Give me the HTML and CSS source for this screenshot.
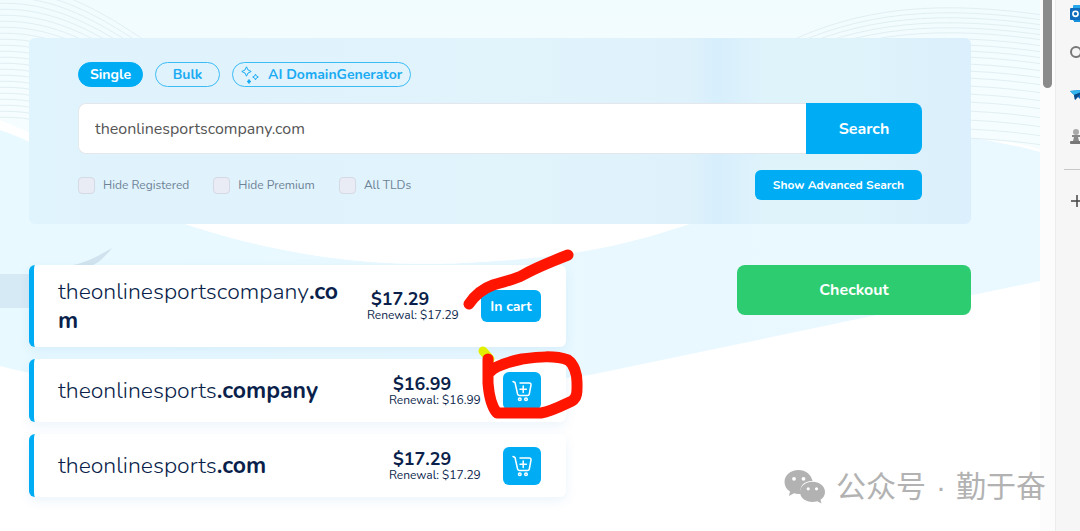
FILE: index.html
```html
<!DOCTYPE html>
<html lang="en">
  <head>
    <meta charset="UTF-8" />
    <title>Domain Search</title>
    <link rel="stylesheet" href="styles.css">
  </head>
  <body>
    <div class="page">
      <!-- waves behind the content -->
      <svg class="page-bg" viewBox="0 0 1040 531" preserveAspectRatio="none" aria-hidden="true">
        <defs>
          <linearGradient id="sky" x1="0" y1="0" x2="0" y2="1">
            <stop offset="0" stop-color="#f1fcff" />
            <stop offset="1" stop-color="#fbfeff" />
          </linearGradient>
          <linearGradient id="wave" x1="0" y1="0" x2="1" y2="0">
            <stop offset="0" stop-color="#e8f9ff" />
            <stop offset="1" stop-color="#eaf8ff" />
          </linearGradient>
          <path id="lineLeft" d="M-10 -14C50 -20 100 10 150 44" />
          <path id="lineRight" d="M780 46C860 6 940 0 1050 16" />
        </defs>
        <rect width="1040" height="531" fill="#fff" />
        <path d="M0 0H1040V150C900 100 800 260 560 262C360 268 160 190 0 120Z" fill="url(#sky)" />
        <path d="M0 130C60 150 120 200 185 224C300 262 400 268 480 262C590 256 640 240 690 222C780 120 920 120 1040 152V281L590 375C400 400 100 395 0 366Z" fill="url(#wave)" />
        <path d="M185 224C300 262 400 268 480 262C590 256 640 240 690 224Z" fill="#fff" />
        <path d="M60 268C85 264 98 256 112 248C104 258 96 266 84 268Z" fill="#d0e3ee" />
        <path d="M0 274H60V308H0Z" fill="#d6eaf5" />
        <g fill="none" stroke="#e1eff3">
          <use href="#lineLeft" />
          <use href="#lineLeft" y="6" />
          <use href="#lineLeft" y="12" />
          <use href="#lineLeft" y="18" />
          <use href="#lineLeft" y="24" />
          <use href="#lineLeft" y="30" />
          <use href="#lineLeft" y="36" />
          <use href="#lineLeft" y="42" />
          <use href="#lineLeft" y="48" />
          <use href="#lineLeft" y="54" />
          <use href="#lineLeft" y="60" />
          <use href="#lineLeft" y="66" />
          <use href="#lineLeft" y="72" />
          <use href="#lineLeft" y="78" />
          <use href="#lineLeft" y="84" />
          <use href="#lineLeft" y="90" />
          <use href="#lineLeft" y="96" />
          <use href="#lineLeft" y="102" />
          <use href="#lineLeft" y="108" />
          <use href="#lineLeft" y="114" />
          <use href="#lineLeft" y="120" />
          <use href="#lineLeft" y="126" />
          <use href="#lineLeft" y="132" />
          <use href="#lineRight" />
          <use href="#lineRight" y="5" />
          <use href="#lineRight" y="10" />
          <use href="#lineRight" y="15" />
          <use href="#lineRight" y="20" />
          <use href="#lineRight" y="25" />
          <use href="#lineRight" y="31" />
          <use href="#lineRight" y="37" />
          <use href="#lineRight" y="43" />
          <use href="#lineRight" y="49" />
          <use href="#lineRight" y="56" />
          <use href="#lineRight" y="63" />
          <use href="#lineRight" y="70" />
          <use href="#lineRight" y="78" />
          <use href="#lineRight" y="86" />
          <use href="#lineRight" y="94" />
          <use href="#lineRight" y="103" />
          <use href="#lineRight" y="112" />
          <use href="#lineRight" y="121" />
          <use href="#lineRight" y="130" />
        </g>
      </svg>

      <main class="content">
        <form class="search-panel">
          <div class="tabs">
            <button type="button" class="tab active">Single</button>
            <button type="button" class="tab">Bulk</button>
            <button type="button" class="tab tab-ai">
              <svg width="18" height="18" viewBox="0 0 18 18" fill="none" stroke="currentColor" stroke-linejoin="round" aria-hidden="true">
                <path d="M5.500 .8Q6.200 4.800 10.200 5.500Q6.200 6.200 5.500 10.200Q4.800 6.200 .8 5.500Q4.800 4.800 5.500 .8Z" />
                <path d="M14.500 8.200Q15 10.500 17.300 11Q15 11.500 14.500 13.800Q14 11.500 11.700 11Q14 10.500 14.500 8.200Z" />
                <path d="M8 13.500Q8.300 15.200 10 15.500Q8.300 15.800 8 17.500Q7.700 15.800 6 15.500Q7.700 15.200 8 13.500Z" fill="currentColor" />
              </svg>
              AI DomainGenerator
            </button>
          </div>

          <div class="search-row">
            <input type="text" class="search-input" value="theonlinesportscompany.com" aria-label="Domain name" />
            <button type="submit" class="btn search-btn">Search</button>
          </div>

          <div class="options">
            <label class="check"><input type="checkbox" />Hide Registered</label>
            <label class="check"><input type="checkbox" />Hide Premium</label>
            <label class="check"><input type="checkbox" />All TLDs</label>
            <button type="button" class="btn advanced-btn">Show Advanced Search</button>
          </div>
        </form>

        <div class="columns">
          <div class="results">
            <div class="result">
              <div class="domain">theonlinesportscompany<b>.com</b></div>
              <div class="price">
                <strong>$17.29</strong>
                <span>Renewal: $17.29</span>
              </div>
              <button class="btn in-cart">In cart</button>
            </div>

            <div class="result">
              <div class="domain">theonlinesports<b>.company</b></div>
              <div class="price">
                <strong>$16.99</strong>
                <span>Renewal: $16.99</span>
              </div>
              <button class="btn add-cart" aria-label="Add to cart">
                <svg width="20" height="22" viewBox="0 0 20 22" fill="none" stroke="currentColor" stroke-width="1.500" stroke-linecap="round" stroke-linejoin="round">
                  <path d="M1 1.500L3 2.500L5.600 14Q6 15.500 7.500 15.500H15.500Q17 15.500 17.300 14L19 5Q19.200 3 17.300 3H8" />
                  <path d="M11.200 6V12.400M8 9.200H14.400" />
                  <circle cx="7.800" cy="19.200" r="1.300" />
                  <circle cx="14" cy="19.200" r="1.300" />
                </svg>
              </button>
            </div>

            <div class="result">
              <div class="domain">theonlinesports<b>.com</b></div>
              <div class="price">
                <strong>$17.29</strong>
                <span>Renewal: $17.29</span>
              </div>
              <button class="btn add-cart" aria-label="Add to cart">
                <svg width="20" height="22" viewBox="0 0 20 22" fill="none" stroke="currentColor" stroke-width="1.500" stroke-linecap="round" stroke-linejoin="round">
                  <path d="M1 1.500L3 2.500L5.600 14Q6 15.500 7.500 15.500H15.500Q17 15.500 17.300 14L19 5Q19.200 3 17.300 3H8" />
                  <path d="M11.200 6V12.400M8 9.200H14.400" />
                  <circle cx="7.800" cy="19.200" r="1.300" />
                  <circle cx="14" cy="19.200" r="1.300" />
                </svg>
              </button>
            </div>

            <!-- pen marks over the results -->
            <svg class="marks" width="130" height="180" viewBox="460 245 130 180" fill="none" stroke-width="11" stroke-linecap="round" stroke-linejoin="round" aria-hidden="true">
              <path d="M483 351L490 359" stroke="#e2f000" stroke-width="9" />
              <path d="M469 304C475 295 482 289 493 285C505 281 514 280 523 275C535 268 550 262 568 255" stroke="#ff1500" />
              <path d="M488 359V383C489 396 491 406 497 413H541C553 411 563 405 572 401C578 397 577 390 577 382C577 374 574 364 568 360C554 355 538 357 522 359C508 362 495 366 490 372" stroke="#ff1500" />
            </svg>
          </div>

          <button class="checkout">Checkout</button>
        </div>
      </main>
    </div>

    <div class="scrollbar"><div class="thumb"></div></div>

    <aside class="sidebar">
      <svg width="20" height="18" viewBox="0 0 20 18">
        <rect x="3" width="15" height="16" rx="1" fill="#28a8ea" />
        <rect x="4" y="12" width="14" height="5" fill="#1490df" />
        <rect y="3" width="12" height="12" rx="1" fill="#0f6cbd" />
        <circle cx="5.500" cy="8.800" r="2.600" fill="none" stroke="#fff" stroke-width="1.600" />
      </svg>
      <svg width="20" height="18" viewBox="0 0 20 18" fill="none" stroke="#777" stroke-width="2">
        <circle cx="6" cy="6" r="5" />
        <path d="M10 10L15 15" />
      </svg>
      <svg width="20" height="18" viewBox="0 0 20 18">
        <path d="M0 4L18 2L13 15L8 10L5 13L4 8Z" fill="#0b69c4" />
        <path d="M0 4L18 2L4 8Z" fill="#33b6f0" />
        <path d="M4 8L12 5L5 13Z" fill="#0a4a86" />
      </svg>
      <svg width="20" height="18" viewBox="0 0 20 18" fill="#777">
        <circle cx="6" cy="4" r="3" fill="#aaa" />
        <path d="M2 7H10V9H8L9 13H3L4 9H2Z" fill="#888" />
        <rect y="13" width="12" height="3" rx="1" />
        <circle cx="14" cy="5" r="3" />
        <path d="M11 8H18V16H13Z" />
      </svg>
      <hr>
      <svg width="20" height="18" viewBox="0 0 20 18" fill="none" stroke="#444" stroke-width="1.500">
        <path d="M1 8H13M7 2V14" />
      </svg>
    </aside>

    <div class="watermark">
      <svg width="42" height="36" viewBox="0 0 42 36" fill="#b2b2b2" aria-hidden="true">
        <path d="M14.500 1C6.500 1 .5 6.300 .5 13C.5 17 2.600 20.300 6 22.500L5 27L10 24.300C12 25 15 25.200 17 24.800C14.500 17 21 11.500 28.500 12C27.300 5.500 21.500 1 14.500 1Z" />
        <path d="M28.500 12.800C21.500 12.800 16 17.400 16 23C16 28.800 21.500 33 28.500 33C30 33 31.800 32.700 33.300 32.300L37.500 34.500L36.500 30.800C39.300 28.900 41 26.200 41 23C41 17.400 35.500 12.800 28.500 12.800Z" />
        <g fill="#fff">
          <circle cx="10" cy="9.800" r="1.900" />
          <circle cx="19.500" cy="9.800" r="1.900" />
          <circle cx="24.200" cy="19.800" r="1.600" />
          <circle cx="32.500" cy="19.800" r="1.600" />
        </g>
      </svg>
      <span>公众号</span>
      <span>·</span>
      <span>勤于奋</span>
    </div>
  </body>
</html>
```
FILE: styles.css
```css
* {
  box-sizing: border-box;
}
body {
  margin: 0;
  display: flex;
  min-height: 100vh;
  font-family: Nunito, Lato, sans-serif;
  color: #0b1f4b;
  background-color: #fff;
  overflow: hidden;
}
button {
  font-family: inherit;
  cursor: pointer;
}
.page {
  position: relative;
  flex: 1;
}
.page-bg {
  position: absolute;
  top: 0;
  left: 0;
  width: 100%;
  height: 100%;
}
.content {
  position: relative;
  padding: 38px 69px 34px 29px;
}

/* Search panel */
.search-panel {
  display: flex;
  flex-direction: column;
  gap: 16px;
  padding: 24px 49px;
  border-radius: 6px;
  background: linear-gradient(
    90deg,
    #e0f4fd 0%,
    #e0f2fc 20%,
    #e1f4fc 50%,
    #dff2fb 70%,
    #d7eefc 73%,
    #dff3fb 78%,
    #dff3fb 88%,
    #dbeffc 100%
  );
}
.tabs {
  display: flex;
  gap: 12px;
}
.tab {
  display: flex;
  align-items: center;
  justify-content: center;
  min-width: 65px;
  height: 25px;
  padding: 0 8px;
  border: 1px solid #3cbcf6;
  border-radius: 13px;
  background: none;
  color: #1aabf3;
  font-size: 14px;
  font-weight: 700;
}
.tab.active {
  background-color: #00adf5;
  border-color: #00adf5;
  color: #fff;
}
.tab-ai {
  gap: 9px;
}
.search-row {
  display: flex;
}
.search-input {
  flex: 1;
  min-width: 0;
  height: 51px;
  padding: 0 16px;
  border: 1px solid #e4e8ec;
  border-right: none;
  border-radius: 8px 0 0 8px;
  background-color: #fff;
  color: #555;
  font-family: inherit;
  font-size: 16px;
}
.btn {
  border: none;
  border-radius: 6px;
  background-color: #00adf5;
  color: #fff;
  font-weight: 700;
}
.search-btn {
  width: 116px;
  border-radius: 0 8px 8px 0;
  font-size: 16px;
}
.options {
  display: flex;
  align-items: center;
  gap: 24px;
}
.check {
  display: flex;
  align-items: center;
  gap: 8px;
  color: #6d8296;
  font-size: 12px;
  line-height: 16px;
}
.check input {
  appearance: none;
  width: 17px;
  height: 17px;
  margin: 0;
  border: 1px solid #d5d9e3;
  border-radius: 4px;
  background-color: #e9ecf5;
}
.advanced-btn {
  height: 30px;
  margin-left: auto;
  padding: 0 18px;
  font-size: 12px;
}

/* Results and checkout */
.columns {
  display: flex;
  align-items: flex-start;
  justify-content: space-between;
  margin-top: 41px;
}
.results {
  position: relative;
  display: flex;
  flex-direction: column;
  gap: 12px;
  width: 57%;
}
.result {
  display: flex;
  align-items: center;
  min-height: 63px;
  padding: 12px 25px 12px 24px;
  border-left: 5px solid #00adf5;
  border-radius: 6px;
  background-color: #fff;
  box-shadow: 0 4px 12px rgba(0, 120, 200, 0.08);
}
.domain {
  flex: 1;
  padding-right: 16px;
  font-size: 23px;
  font-weight: 300;
  line-height: 29px;
  word-break: break-all;
}
.domain b {
  font-weight: 700;
}
.price {
  display: flex;
  flex-direction: column;
  min-width: 94px;
  margin-right: 20px;
}
.price strong {
  padding-left: 4px;
  font-size: 18px;
  line-height: 18px;
}
.price span {
  font-size: 12px;
  line-height: 14px;
}
.in-cart {
  width: 60px;
  height: 32px;
  padding: 0;
  font-size: 14px;
}
.add-cart {
  display: flex;
  align-items: center;
  justify-content: center;
  width: 38px;
  height: 38px;
  padding: 0;
}
.checkout {
  width: 234px;
  height: 50px;
  border: none;
  border-radius: 8px;
  background-color: #2ecc71;
  color: #fff;
  font-size: 16px;
  font-weight: 700;
}
.marks {
  position: absolute;
  top: -20px;
  right: -24px;
  pointer-events: none;
}

/* Browser edge */
.scrollbar {
  width: 15px;
  padding: 0 3px;
  background-color: #fcfcfc;
}
.thumb {
  height: 88px;
  border-radius: 0 0 5px 5px;
  background-color: #8b8b8b;
}
.sidebar {
  display: flex;
  flex-direction: column;
  gap: 23px;
  width: 25px;
  padding: 5px 0 0 14px;
  border-left: 1px solid #ececec;
  background-color: #f6f6f6;
  overflow: hidden;
}
.sidebar svg {
  flex: none;
}
.sidebar hr {
  margin: 0 0 0 -6px;
  border: none;
  border-top: 1px solid #c8c8c8;
}
.watermark {
  position: absolute;
  right: 34px;
  bottom: 24px;
  display: flex;
  align-items: center;
  gap: 10px;
  color: #b2b2b2;
  font-family: "Liberation Sans", "Noto Sans CJK SC", sans-serif;
  font-size: 30px;
  line-height: 40px;
}
```
